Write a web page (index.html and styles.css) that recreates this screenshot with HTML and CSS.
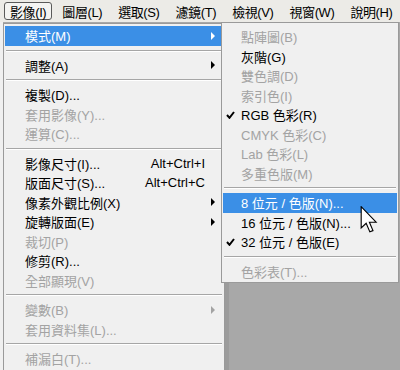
FILE: index.html
```html
<!DOCTYPE html>
<html lang="zh-Hant">
<head>
  <meta charset="UTF-8">
  <title>影像 - 模式</title>
  <link rel="stylesheet" href="styles.css">
</head>
<body>
  <div class="menubar">
    <span class="mb-item active">影像(I)</span>
    <span class="mb-item">圖層(L)</span>
    <span class="mb-item">選取(S)</span>
    <span class="mb-item">濾鏡(T)</span>
    <span class="mb-item">檢視(V)</span>
    <span class="mb-item">視窗(W)</span>
    <span class="mb-item">說明(H)</span>
  </div>

  <div class="workspace"></div>

  <!-- main dropdown -->
  <div class="menu main-menu">
    <div class="item hl">模式(M)<span class="arrow"></span></div>
    <div class="sep"></div>
    <div class="item">調整(A)<span class="arrow"></span></div>
    <div class="sep"></div>
    <div class="item">複製(D)...</div>
    <div class="item off">套用影像(Y)...</div>
    <div class="item off">運算(C)...</div>
    <div class="sep"></div>
    <div class="item">影像尺寸(I)...<span class="key">Alt+Ctrl+I</span></div>
    <div class="item">版面尺寸(S)...<span class="key">Alt+Ctrl+C</span></div>
    <div class="item">像素外觀比例(X)<span class="arrow"></span></div>
    <div class="item">旋轉版面(E)<span class="arrow"></span></div>
    <div class="item off">裁切(P)</div>
    <div class="item">修剪(R)...</div>
    <div class="item off">全部顯現(V)</div>
    <div class="sep"></div>
    <div class="item off">變數(B)<span class="arrow"></span></div>
    <div class="item off">套用資料集(L)...</div>
    <div class="sep"></div>
    <div class="item off">補漏白(T)...</div>
  </div>

  <!-- 模式 submenu -->
  <div class="menu sub-menu">
    <div class="item off"><span class="check"></span>點陣圖(B)</div>
    <div class="item"><span class="check"></span>灰階(G)</div>
    <div class="item off"><span class="check"></span>雙色調(D)</div>
    <div class="item off"><span class="check"></span>索引色(I)</div>
    <div class="item"><span class="check"><svg width="9" height="8" viewBox="0 0 9 8"><path d="M1 4 L3.5 6.8 L8 1" fill="none" stroke="#000" stroke-width="2"/></svg></span>RGB 色彩(R)</div>
    <div class="item off"><span class="check"></span>CMYK 色彩(C)</div>
    <div class="item off"><span class="check"></span>Lab 色彩(L)</div>
    <div class="item off"><span class="check"></span>多重色版(M)</div>
    <div class="sep"></div>
    <div class="item hl"><span class="check"></span>8 位元 / 色版(N)...</div>
    <div class="item"><span class="check"></span>16 位元 / 色版(N)...</div>
    <div class="item"><span class="check"><svg width="9" height="8" viewBox="0 0 9 8"><path d="M1 4 L3.5 6.8 L8 1" fill="none" stroke="#000" stroke-width="2"/></svg></span>32 位元 / 色版(E)</div>
    <div class="sep"></div>
    <div class="item off"><span class="check"></span>色彩表(T)...</div>
  </div>

  <svg class="cursor" width="18" height="27" viewBox="0 0 12 19">
    <path d="M0.5 0.5 L0.5 15.5 L4 12.2 L6.6 18.2 L8.8 17.3 L6.3 11.4 L11 11.4 Z" fill="#fff" stroke="#000" stroke-width="0.8" stroke-linejoin="miter"/>
  </svg>
</body>
</html>
```

FILE: styles.css
```css
body {
  margin: 0;
  width: 400px;
  height: 370px;
  overflow: hidden;
  position: relative;
  font-family: 'Liberation Sans', 'Noto Sans CJK TC', sans-serif;
  font-size: 13px;
  color: #000;
  background-color: #f0f0f0;
}

.menubar {
  display: flex;
  align-items: center;
  gap: 4px;
  height: 22px;
  padding-left: 4px;
  background-color: #ecebe7;
  letter-spacing: -0.4px;
}

.mb-item {
  display: flex;
  align-items: center;
  height: 16px;
  padding: 0 5px;
  border: 1px solid transparent;
  border-radius: 3px;
  white-space: nowrap;
}

.mb-item.active {
  border-color: #5a5a5a;
  background-color: #f4f4f2;
}

.workspace {
  height: 348px;
  border-left: 3px solid #f0f0f0;
  background-color: #a8a8a8;
}

.menu {
  position: absolute;
  box-sizing: border-box;
  background-color: #f0f0f0;
  border: 1px solid #9a9a9a;
}

.main-menu {
  top: 23px;
  left: 3px;
  width: 222px;
  padding: 2px 1px;
  box-shadow: 4px 0 0 #9c9c9c;
}

.sub-menu {
  top: 22px;
  left: 221px;
  width: 178px;
  padding: 4px 1px 1px;
  z-index: 2;
}

.item {
  display: flex;
  align-items: center;
  height: 19.5px;
  padding: 0 8px 0 20px;
  white-space: nowrap;
}

.sub-menu .item {
  padding-left: 3px;
}

.item.off {
  color: #a3a3a3;
}

.item.hl {
  background-color: #3b8fe6;
  color: #fff;
}

.key {
  margin-left: auto;
  padding-right: 10px;
}

.arrow {
  margin-left: auto;
  width: 0;
  height: 0;
  border-top: 4px solid transparent;
  border-bottom: 4px solid transparent;
  border-left: 4px solid #000;
}

.item.hl .arrow {
  border-left-color: #fff;
}

.item.off .arrow {
  border-left-color: #a3a3a3;
}

.check {
  display: flex;
  align-items: center;
  width: 15px;
}

.sep {
  height: 0;
  margin: 4px 1px;
  border-top: 1px solid #a6a6a6;
  border-bottom: 1px solid #ffffff;
}

.cursor {
  position: absolute;
  left: 360px;
  top: 206px;
  z-index: 3;
}
```
